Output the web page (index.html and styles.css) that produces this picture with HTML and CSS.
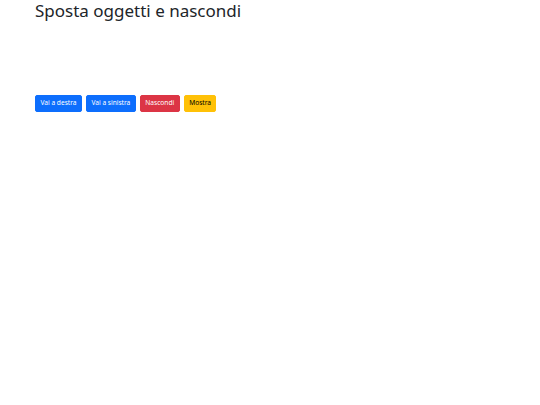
FILE: index.html
```html
<!DOCTYPE html>
<html lang="it">
<head>
<meta charset="utf-8">
<link rel="stylesheet" href="styles.css">
</head>
<body>
<div class="container">
  <h1 class="title">Sposta oggetti e nascondi</h1>
  <div class="stage"></div>
  <div class="buttons">
    <button class="btn btn-primary">Vai a destra</button>
    <button class="btn btn-primary">Vai a sinistra</button>
    <button class="btn btn-danger">Nascondi</button>
    <button class="btn btn-warning">Mostra</button>
  </div>
</div>
</body>
</html>
```
FILE: styles.css
```css
body {
  margin: 0;
  font-family: "Noto Sans", "Open Sans", sans-serif;
  color: #212529;
  background: #fff;
}
.container {
  padding: 0 35px;
}
.title {
  margin: 0;
  font-size: 17px;
  font-weight: 400;
  line-height: 22px;
}
.stage {
  height: 73px;
}
.buttons {
  display: flex;
  gap: 4px;
}
.btn {
  font-family: inherit;
  font-size: 6.6px;
  line-height: 10.5px;
  padding: 2px 4.5px;
  border-radius: 2px;
  border: 0.5px solid transparent;
  color: #fff;
}
.btn-primary { background: #0d6efd; border-color: #0d6efd; }
.btn-danger { background: #dc3545; border-color: #dc3545; }
.btn-warning { background: #ffc107; border-color: #ffc107; color: #000; }
```
